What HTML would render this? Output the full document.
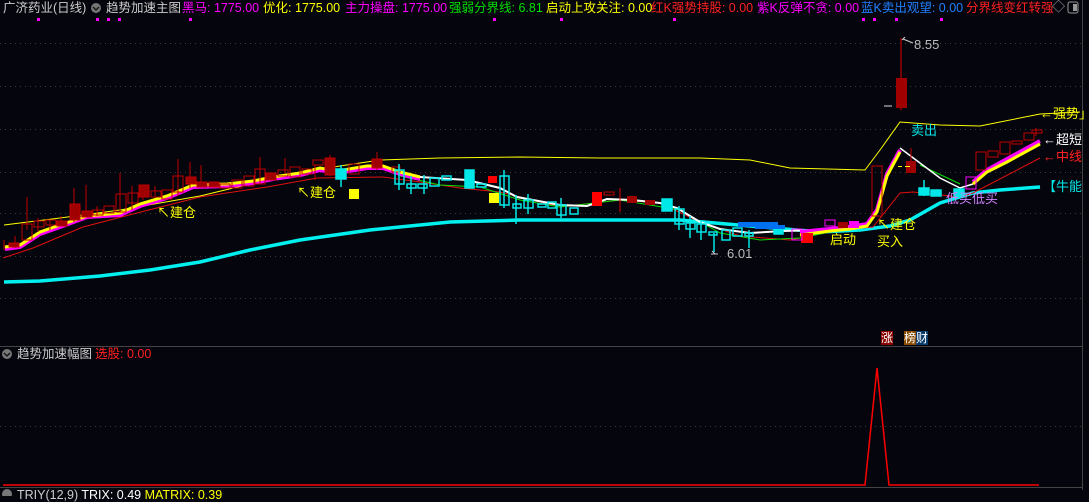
<!DOCTYPE html>
<html><head><meta charset="utf-8"><style>
body{margin:0;background:#05050d;width:1089px;height:496px;overflow:hidden;position:relative;font-family:"Liberation Sans","Noto Sans CJK SC",sans-serif;font-size:12.5px}
.t{position:absolute;white-space:nowrap;line-height:14px}
svg{position:absolute;left:0;top:0}
</style></head><body>
<svg width="1089" height="496" viewBox="0 0 1089 496">
<g stroke="#3a3a3a" stroke-dasharray="1 4" stroke-width="1">
<line x1="0" y1="43.5" x2="1081" y2="43.5"/><line x1="0" y1="86.5" x2="1081" y2="86.5"/><line x1="0" y1="129.5" x2="1081" y2="129.5"/><line x1="0" y1="172.5" x2="1081" y2="172.5"/><line x1="0" y1="213.5" x2="1081" y2="213.5"/><line x1="0" y1="256.5" x2="1081" y2="256.5"/><line x1="0" y1="298.5" x2="1081" y2="298.5"/><line x1="0" y1="426.5" x2="1081" y2="426.5"/>
</g>
<line x1="1082.5" y1="0" x2="1082.5" y2="490" stroke="#444"/>
<line x1="0" y1="346.5" x2="1082" y2="346.5" stroke="#444"/>
<line x1="0" y1="487.5" x2="1082" y2="487.5" stroke="#444"/>
<g fill="#ff00ff"><rect x="37" y="18" width="3" height="3"/><rect x="96" y="18" width="3" height="3"/><rect x="107" y="18" width="3" height="3"/><rect x="118" y="18" width="3" height="3"/><rect x="189" y="18" width="3" height="3"/><rect x="493" y="18" width="3" height="3"/><rect x="560" y="18" width="3" height="3"/><rect x="673" y="18" width="3" height="3"/><rect x="862" y="18" width="3" height="3"/><rect x="873" y="18" width="3" height="3"/><rect x="895" y="18" width="3" height="3"/><rect x="940" y="18" width="3" height="3"/></g>
<polyline fill="none" stroke="#ffff00" stroke-width="1" points="4,225 60,218 120,210 200,196 300,172 380,160 440,158 520,157 600,158 700,158 750,160 790,168 865,170 880,150 900,122 940,125 980,126 1040,114 1080,112"/>
<polyline fill="none" stroke="#00f0f0" stroke-width="3.5" points="4,282 40,281 100,276 150,270 200,262 250,250 300,240 370,230 450,222 520,220 680,220 750,226 820,232 860,230 890,226 910,220 940,203 973,193 1000,190 1040,187"/>
<polyline fill="none" stroke="#e01010" stroke-width="1" points="3,258 33,248 83,227 133,214 200,197 267,187 317,178 383,177 420,182 460,188 500,192 560,207 620,200 660,203 700,222 740,236 790,240 840,230 873,227 900,193 913,192 960,197 973,193 1040,158"/>
<polyline fill="none" stroke="#00e000" stroke-width="1" points="400,176 440,185 480,187 520,200 560,207 620,200 680,210 720,233 760,240 800,238 850,228 870,222"/>
<polyline fill="none" stroke="#00e000" stroke-width="1" points="920,165 960,184"/>
<polyline fill="none" stroke="#ff00ff" stroke-width="4" points="5,249 20,247 40,234 60,227 87,217 120,215 140,206 167,198 193,187 227,186 253,183 273,179 300,175 320,170 337,173 367,168 383,168 400,174 420,179"/>
<polyline fill="none" stroke="#ffff00" stroke-width="3" points="5,247 20,245 40,232 60,225 87,216 120,213 140,204 167,196 193,185 227,184 253,181 273,177 300,173 320,168 337,171 367,166 383,166 400,172 420,177"/>
<polyline fill="none" stroke="#ffffff" stroke-width="2" points="420,177 467,180 500,188 517,197 560,205 587,206 607,199 633,200 660,203 677,208 700,222 720,229 750,233 783,231 817,230 850,226"/>
<polyline fill="none" stroke="#ff00ff" stroke-width="4" points="800,232 830,229 850,227 867,224 877,210 887,174 900,150"/>
<polyline fill="none" stroke="#ffff00" stroke-width="3" points="800,235 830,231 850,229 867,226 877,212 887,176 900,152"/>
<polyline fill="none" stroke="#ffffff" stroke-width="1.5" points="900,148 920,163 940,178 960,188 973,184"/>
<polyline fill="none" stroke="#ff00ff" stroke-width="4" points="973,182 987,170 1007,159 1040,141"/>
<polyline fill="none" stroke="#ffff00" stroke-width="3" points="973,184 987,172 1007,162 1040,144"/>
<g stroke="#c00000" fill="none" stroke-width="1">
<line x1="4" y1="240" x2="4" y2="250"/><line x1="15" y1="236" x2="15" y2="248"/><line x1="27" y1="197" x2="27" y2="230"/><line x1="38" y1="218" x2="38" y2="232"/><line x1="50" y1="220" x2="50" y2="230"/><line x1="61" y1="216" x2="61" y2="226"/><line x1="74" y1="188" x2="74" y2="222"/><line x1="86" y1="185" x2="86" y2="215"/><line x1="97" y1="206" x2="97" y2="216"/><line x1="120" y1="173" x2="120" y2="212"/><line x1="132" y1="186" x2="132" y2="210"/><line x1="143" y1="186" x2="143" y2="200"/><line x1="155" y1="186" x2="155" y2="196"/><line x1="178" y1="159" x2="178" y2="196"/><line x1="190" y1="162" x2="190" y2="188"/><line x1="201" y1="165" x2="201" y2="186"/><line x1="260" y1="157" x2="260" y2="184"/><line x1="285" y1="158" x2="285" y2="174"/><line x1="315" y1="165" x2="315" y2="180"/><line x1="330" y1="155" x2="330" y2="176"/><line x1="377" y1="152" x2="377" y2="170"/>
<rect x="9" y="243" width="10" height="4" fill="#a00000"/>
<rect x="22" y="224" width="10" height="16"/>
<rect x="34" y="221" width="10" height="6"/>
<rect x="46" y="220" width="10" height="5"/>
<rect x="57" y="221" width="10" height="5" fill="#a00000"/>
<rect x="70" y="204" width="10" height="16" fill="#a00000"/>
<rect x="82" y="211" width="10" height="6" fill="#a00000"/>
<rect x="93" y="210" width="10" height="5"/>
<rect x="104" y="206" width="10" height="7"/>
<rect x="116" y="194" width="10" height="18"/>
<rect x="128" y="193" width="10" height="10"/>
<rect x="139" y="185" width="10" height="12" fill="#a00000"/>
<rect x="151" y="191" width="10" height="6"/>
<rect x="162" y="190" width="10" height="9"/>
<rect x="173" y="176" width="10" height="16"/>
<rect x="186" y="177" width="10" height="7" fill="#a00000"/>
<rect x="197" y="182" width="10" height="5" fill="#a00000"/>
<rect x="209" y="182" width="10" height="5" fill="#a00000"/>
<rect x="220" y="184" width="10" height="4"/>
<rect x="232" y="180" width="10" height="8"/>
<rect x="244" y="176" width="10" height="10"/>
<rect x="255" y="169" width="10" height="15"/>
<rect x="266" y="173" width="10" height="7" fill="#a00000"/>
<rect x="278" y="170" width="10" height="6"/>
<rect x="290" y="167" width="10" height="10"/>
<rect x="302" y="169" width="10" height="5"/>
<rect x="313" y="160" width="10" height="5"/>
<rect x="325" y="158" width="10" height="17" fill="#a00000"/>
<rect x="349" y="164" width="10" height="10"/>
<rect x="372" y="159" width="10" height="9" fill="#a00000"/>
<rect x="392" y="167" width="8" height="5"/>
</g>
<g stroke="#00e8e8" fill="none" stroke-width="1.5">
<rect x="336" y="169" width="10" height="10" fill="#00e8e8"/><line x1="341" y1="165" x2="341" y2="187"/>
<rect x="395" y="170" width="9" height="14"/><line x1="399" y1="164" x2="399" y2="190"/>
<rect x="407" y="184" width="9" height="4"/><line x1="411" y1="176" x2="411" y2="194"/>
<rect x="418" y="184" width="9" height="4"/><line x1="424" y1="175" x2="424" y2="194"/>
<rect x="430" y="178" width="9" height="8"/>
<rect x="442" y="176" width="9" height="4"/>
<rect x="465" y="170" width="9" height="18" fill="#00e8e8"/>
<rect x="477" y="184" width="9" height="3"/>
<rect x="500" y="176" width="9" height="29"/><line x1="504" y1="170" x2="504" y2="208"/>
<rect x="513" y="204" width="8" height="4"/><line x1="516" y1="195" x2="516" y2="224"/>
<rect x="524" y="200" width="9" height="8"/><line x1="528" y1="194" x2="528" y2="214"/>
<rect x="538" y="204" width="8" height="3"/>
<rect x="548" y="202" width="8" height="6"/>
<rect x="557" y="205" width="9" height="10"/><line x1="561" y1="198" x2="561" y2="218"/>
<rect x="570" y="208" width="8" height="6"/>
<rect x="662" y="199" width="10" height="12" fill="#00e8e8"/>
<rect x="675" y="209" width="9" height="15"/><line x1="679" y1="206" x2="679" y2="230"/>
<rect x="686" y="223" width="9" height="6"/><line x1="690" y1="216" x2="690" y2="238"/>
<rect x="697" y="224" width="9" height="8"/><line x1="701" y1="220" x2="701" y2="240"/>
<rect x="709" y="232" width="8" height="3"/><line x1="714" y1="233" x2="714" y2="252"/>
<rect x="722" y="230" width="8" height="10"/>
<rect x="733" y="228" width="9" height="8"/>
<rect x="745" y="233" width="8" height="3"/><line x1="749" y1="230" x2="749" y2="248"/>
<rect x="774" y="228" width="9" height="6" fill="#00e8e8"/>
<rect x="919" y="188" width="10" height="7" fill="#00e8e8"/><line x1="924" y1="180" x2="924" y2="196"/>
<rect x="931" y="190" width="10" height="6" fill="#00e8e8"/>
<rect x="954" y="189" width="10" height="8" fill="#00e8e8"/>
</g>
<g fill="#0070f0"><rect x="738" y="222" width="40" height="5"/><rect x="755" y="225" width="30" height="4"/></g>
<rect x="592" y="192" width="10" height="14" fill="#ff0000"/>
<rect x="604" y="192" width="10" height="3" fill="none" stroke="#c00000"/>
<line x1="620" y1="188" x2="620" y2="212" stroke="#e00000"/>
<rect x="627" y="196" width="10" height="7" fill="#a00000"/>
<rect x="645" y="200" width="10" height="5" fill="#a00000"/>
<rect x="488" y="176" width="9" height="7" fill="#ff0000"/>
<rect x="801" y="233" width="12" height="10" fill="#ff0000"/>
<rect x="792" y="229" width="10" height="11" fill="none" stroke="#ff00ff"/>
<rect x="825" y="220" width="10" height="6" fill="none" stroke="#ff00ff"/>
<rect x="838" y="222" width="10" height="6" fill="#a00000"/>
<rect x="849" y="221" width="10" height="7" fill="#ff00ff"/>
<rect x="872" y="166" width="10" height="50" fill="none" stroke="#c00000"/>
<line x1="901" y1="38" x2="901" y2="110" stroke="#e00000"/>
<rect x="896" y="78" width="11" height="30" fill="#a00000"/>
<line x1="884" y1="106" x2="892" y2="106" stroke="#ddd"/>
<line x1="911" y1="148" x2="911" y2="172" stroke="#c00000"/>
<rect x="906" y="161" width="10" height="12" fill="#a00000"/>
<rect x="966" y="177" width="10" height="12" fill="none" stroke="#ff00ff"/>
<g stroke="#c00000" fill="none">
<rect x="976" y="152" width="10" height="18"/><rect x="988" y="151" width="10" height="6"/><rect x="1000" y="142" width="10" height="12"/><rect x="1012" y="141" width="10" height="3"/><rect x="1024" y="133" width="10" height="7"/><line x1="1036" y1="128" x2="1036" y2="136"/><rect x="1032" y="130" width="10" height="3"/>
</g>
<rect x="349" y="189" width="10" height="10" fill="#ffff00"/>
<rect x="489" y="193" width="10" height="10" fill="#ffff00"/>
<g fill="#ffff00"><rect x="898" y="166" width="4" height="1"/><rect x="905" y="166" width="5" height="1"/></g>
<path d="M715,254 L712,251 M711,254 L718,254" stroke="#ccc" fill="none"/>
<path d="M902,40 L905,37 M903,39 L913,43" stroke="#ccc" fill="none"/>
<polyline fill="none" stroke="#ff0000" stroke-width="1.5" points="3,485 865,485 877,368 889,485 1039,485"/>
<circle cx="96" cy="8" r="5" fill="#777"/><path d="M93,7 L96,10 L99,7" stroke="#111" fill="none" stroke-width="1.3"/>
<circle cx="7" cy="354" r="5" fill="#777"/><path d="M4,353 L7,356 L10,353" stroke="#111" fill="none" stroke-width="1.3"/>
<circle cx="7" cy="494" r="5" fill="#777"/>
<rect x="1068" y="2" width="10" height="11" rx="2" fill="none" stroke="#999"/><rect x="1073" y="4" width="4" height="7" fill="#999"/>
</svg>
<div class="t" style="left:3px;top:1px;color:#ccc">广济药业(日线)</div>
<div class="t" style="left:106px;top:1px;color:#ccc">趋势加速主图</div>
<div class="t" style="left:182px;top:1px;color:#ff00ff">黑马: 1775.00</div>
<div class="t" style="left:263px;top:1px;color:#ffff00">优化: 1775.00</div>
<div class="t" style="left:345px;top:1px;color:#ff00ff">主力操盘: 1775.00</div>
<div class="t" style="left:449px;top:1px;color:#00e000">强弱分界线: 6.81</div>
<div class="t" style="left:546px;top:1px;color:#ffff00">启动上攻关注: 0.00</div>
<div class="t" style="left:651px;top:1px;color:#ff2020">红K强势持股: 0.00</div>
<div class="t" style="left:757px;top:1px;color:#ff00ff">紫K反弹不贪: 0.00</div>
<div class="t" style="left:861px;top:1px;color:#2080ff">蓝K卖出观望: 0.00</div>
<div class="t" style="left:966px;top:1px;color:#ff2020">分界线变红转强</div>
<div class="t" style="left:1052px;top:0px;color:#aaa;font-size:13px">◇</div>
<div class="t" style="left:157px;top:206px;color:#ffff00;font-size:13px">↖建仓</div>
<div class="t" style="left:297px;top:186px;color:#ffff00;font-size:13px">↖建仓</div>
<div class="t" style="left:830px;top:233px;color:#ffff00;font-size:13px">启动</div>
<div class="t" style="left:877px;top:235px;color:#ffff00;font-size:13px">买入</div>
<div class="t" style="left:877px;top:218px;color:#ffff00;font-size:13px">↖建仓</div>
<div class="t" style="left:911px;top:124px;color:#00e8e8;font-size:13px">卖出</div>
<div class="t" style="left:946px;top:192px;color:#d080ff;font-size:13px">低买低买</div>
<div class="t" style="left:914px;top:38px;color:#bbb;font-size:13px">8.55</div>
<div class="t" style="left:727px;top:247px;color:#bbb;font-size:13px">6.01</div>
<div class="t" style="left:1040px;top:107px;color:#ffff00;font-size:13px">←强势」</div>
<div class="t" style="left:1043px;top:133px;color:#fff;font-size:13px">←超短</div>
<div class="t" style="left:1043px;top:150px;color:#ff2020;font-size:13px">←中线</div>
<div class="t" style="left:1043px;top:180px;color:#00e8e8;font-size:13px">【牛能</div>
<div class="t" style="left:881px;top:331px;color:#fff;background:#8a0000;font-size:12px">涨</div>
<div class="t" style="left:904px;top:331px;color:#fff;background:#8a4a00;font-size:12px">榜</div>
<div class="t" style="left:916px;top:331px;color:#fff;background:#0a3a6a;font-size:12px">财</div>
<div class="t" style="left:17px;top:347px;color:#ccc">趋势加速幅图</div>
<div class="t" style="left:95px;top:347px;color:#ff2020">选股: 0.00</div>
<div class="t" style="left:17px;top:488px;color:#ccc">TRIY(12,9) <span style="color:#fff">TRIX: 0.49</span> <span style="color:#ffff00">MATRIX: 0.39</span></div>
</body></html>
